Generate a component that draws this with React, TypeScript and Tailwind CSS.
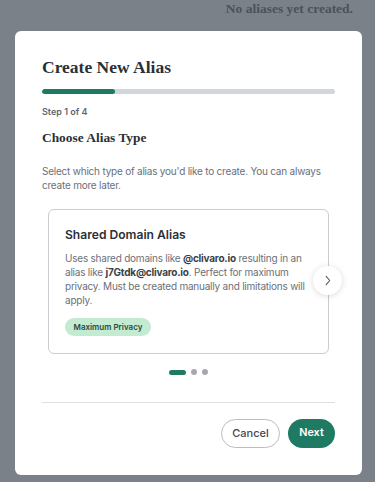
import React from "react";

const serif = { fontFamily: '"Liberation Serif", "DejaVu Serif", serif' };

export default function App() {
  return (
    <div className="w-[375px] h-[482px] bg-[#7b8189] overflow-hidden relative" style={{ fontFamily: 'Inter, "Noto Sans", sans-serif' }}>
      <div className="flex justify-end pr-[22px] pt-[1px] h-[31px]">
        <span className="text-[13.5px] leading-[16px] font-bold text-[#4c5159]" style={serif}>No aliases yet created.</span>
      </div>
      <div className="mx-[15px] w-[347px] h-[444px] bg-white rounded-[6px] px-[27px] pt-[26px] flex flex-col">
        <h2 className="text-[17.5px] leading-[20px] font-bold text-[#2b2f36]" style={serif}>Create New Alias</h2>
        <div className="mt-[12px] h-[5px] rounded-full bg-[#d2d5d9] overflow-hidden">
          <div className="h-full w-1/4 bg-[#1f7a63] rounded-full" />
        </div>
        <div className="mt-[12px] text-[9px] leading-[12px] font-semibold text-[#5f6570]">Step 1 of 4</div>
        <h3 className="mt-[11px] text-[13.4px] leading-[18px] font-bold text-[#2b2f36]" style={serif}>Choose Alias Type</h3>
        <p className="mt-[17px] text-[10px] tracking-[-0.22px] leading-[14px] text-[#6b7079]">
          Select which type of alias you'd like to create. You can always create more later.
        </p>
        <div className="relative mt-[17px] px-[6px]">
          <div className="h-[145px] border border-[#c9cdd2] rounded-[6px] px-[16px] pt-[17px]">
            <div className="text-[12.1px] leading-[16px] font-semibold text-[#2b2f36]">Shared Domain Alias</div>
            <p className="mt-[8px] text-[10px] tracking-[-0.22px] leading-[14px] text-[#6b7079] pr-[6px]">
              Uses shared domains like <b className="font-bold text-[#3a3f47]">@clivaro.io</b> resulting in an alias like <b className="font-bold text-[#3a3f47]">j7Gtdk@clivaro.io</b>. Perfect for maximum privacy. Must be created manually and limitations will apply.
            </p>
            <span className="inline-flex items-center mt-[11px] h-[18px] px-[8.5px] rounded-full bg-[#c3ebd2] text-[8px] font-semibold text-[#2d4a3c]">Maximum Privacy</span>
          </div>
          <button className="absolute right-[-7px] top-[57px] w-[29px] h-[29px] rounded-full bg-white shadow-[0_1px_6px_rgba(0,0,0,0.15)] flex items-center justify-center">
            <svg width="11" height="11" viewBox="0 0 24 24" fill="none" stroke="#4b5058" strokeWidth="2.2" strokeLinecap="round" strokeLinejoin="round"><path d="M9 3l8 9-8 9" /></svg>
          </button>
        </div>
        <div className="mt-[15px] flex items-center justify-center gap-[5px]">
          <span className="w-[17px] h-[5px] rounded-full bg-[#1f7a63]" />
          <span className="w-[6px] h-[6px] rounded-full bg-[#a5a9af]" />
          <span className="w-[6px] h-[6px] rounded-full bg-[#a5a9af]" />
        </div>
        <div className="mt-[27px] h-px bg-[#dde0e3]" />
        <div className="mt-[16px] flex justify-end gap-[8px]">
          <button className="h-[29px] w-[59px] rounded-full border border-[#b9bdc2] text-[11px] font-medium text-[#444950]">Cancel</button>
          <button className="h-[29px] w-[47px] rounded-full bg-[#1f7a63] text-[10.8px] font-semibold text-white">Next</button>
        </div>
      </div>
    </div>
  );
}
